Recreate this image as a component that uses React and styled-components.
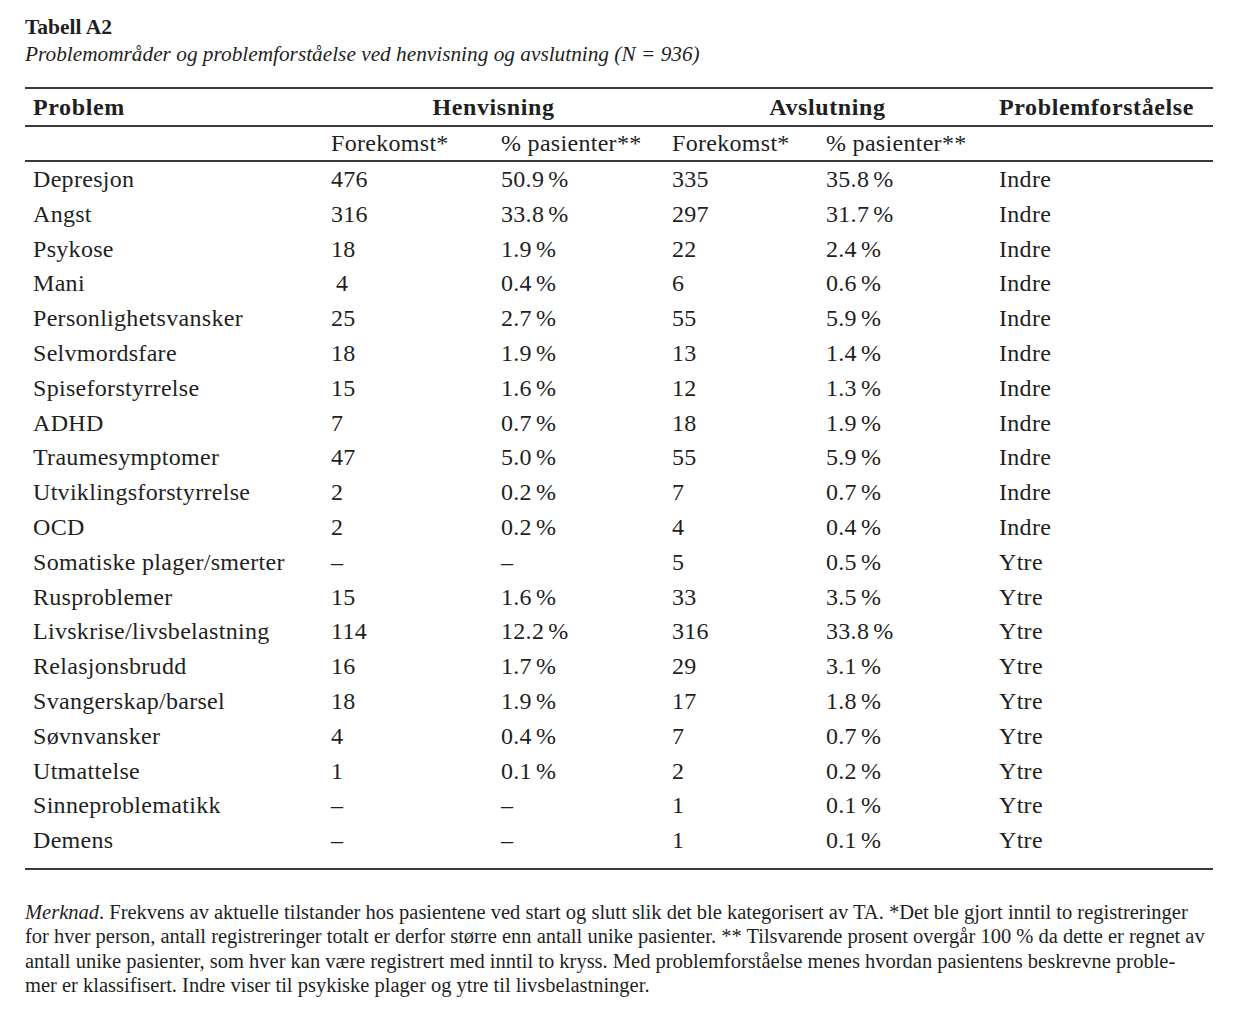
import styled, { createGlobalStyle } from 'styled-components';

const GlobalStyle = createGlobalStyle`
  html, body {
    margin: 0;
    padding: 0;
    background: #fff;
  }
  body {
    font-family: "Liberation Serif", "DejaVu Serif", serif;
    color: #1f1f1f;
  }
`;

const Page = styled.div`
  width: 1240px;
  padding: 14px 27px 0 25px;
  box-sizing: border-box;
`;

const Caption = styled.div`
  font-size: 21.5px;
  font-weight: bold;
  line-height: 27px;
`;

const Subtitle = styled.div`
  font-size: 21.3px;
  font-style: italic;
  line-height: 27px;
`;

const Table = styled.div`
  margin-top: 19px;
  display: grid;
  grid-template-columns: 298px 170px 171px 154px 173px 1fr;
  border-top: 2px solid #3a3a3a;
  border-bottom: 2px solid #3a3a3a;
  padding-bottom: 10px;
  font-size: 24px;
  letter-spacing: 0.3px;
`;

const HeadCell = styled.div`
  grid-column: ${(p) => p.span || 'auto'};
  font-weight: bold;
  letter-spacing: 0.6px;
  text-align: ${(p) => (p.center ? 'center' : 'left')};
  padding: 0 8px;
  height: 36px;
  line-height: 36px;
  border-bottom: 2px solid #3a3a3a;
`;

const SubCell = styled.div`
  padding: 0 8px;
  height: 33px;
  line-height: 33px;
  border-bottom: 2px solid #3a3a3a;
`;

const Cell = styled.div`
  padding: 0 8px 0 ${(p) => (p.indent ? 13 : 8)}px;
  height: 34.8px;
  line-height: 34.8px;
  white-space: nowrap;
`;

const Pct = styled.span`
  letter-spacing: -0.5px;
  margin-left: 4px;
`;

const Note = styled.div`
  margin-top: 30px;
  font-size: 20.5px;
  line-height: 24.4px;
`;

const NoteLine = styled.span`
  display: block;
  white-space: nowrap;
`;

const rows = [
  ['Depresjon', '476', '50.9 %', '335', '35.8 %', 'Indre'],
  ['Angst', '316', '33.8 %', '297', '31.7 %', 'Indre'],
  ['Psykose', '18', '1.9 %', '22', '2.4 %', 'Indre'],
  ['Mani', '4', '0.4 %', '6', '0.6 %', 'Indre'],
  ['Personlighetsvansker', '25', '2.7 %', '55', '5.9 %', 'Indre'],
  ['Selvmordsfare', '18', '1.9 %', '13', '1.4 %', 'Indre'],
  ['Spiseforstyrrelse', '15', '1.6 %', '12', '1.3 %', 'Indre'],
  ['ADHD', '7', '0.7 %', '18', '1.9 %', 'Indre'],
  ['Traumesymptomer', '47', '5.0 %', '55', '5.9 %', 'Indre'],
  ['Utviklingsforstyrrelse', '2', '0.2 %', '7', '0.7 %', 'Indre'],
  ['OCD', '2', '0.2 %', '4', '0.4 %', 'Indre'],
  ['Somatiske plager/smerter', '–', '–', '5', '0.5 %', 'Ytre'],
  ['Rusproblemer', '15', '1.6 %', '33', '3.5 %', 'Ytre'],
  ['Livskrise/livsbelastning', '114', '12.2 %', '316', '33.8 %', 'Ytre'],
  ['Relasjonsbrudd', '16', '1.7 %', '29', '3.1 %', 'Ytre'],
  ['Svangerskap/barsel', '18', '1.9 %', '17', '1.8 %', 'Ytre'],
  ['Søvnvansker', '4', '0.4 %', '7', '0.7 %', 'Ytre'],
  ['Utmattelse', '1', '0.1 %', '2', '0.2 %', 'Ytre'],
  ['Sinneproblematikk', '–', '–', '1', '0.1 %', 'Ytre'],
  ['Demens', '–', '–', '1', '0.1 %', 'Ytre'],
];

const renderValue = (v) =>
  v.endsWith(' %') ? (
    <>
      {v.slice(0, -2)}
      <Pct>%</Pct>
    </>
  ) : (
    v
  );

export default function App() {
  return (
    <Page>
      <GlobalStyle />
      <Caption>Tabell A2</Caption>
      <Subtitle>Problemområder og problemforståelse ved henvisning og avslutning (N = 936)</Subtitle>
      <Table>
        <HeadCell>Problem</HeadCell>
        <HeadCell span="span 2" center>Henvisning</HeadCell>
        <HeadCell span="span 2" center>Avslutning</HeadCell>
        <HeadCell>Problemforståelse</HeadCell>

        <SubCell />
        <SubCell>Forekomst*</SubCell>
        <SubCell>% pasienter**</SubCell>
        <SubCell>Forekomst*</SubCell>
        <SubCell>% pasienter**</SubCell>
        <SubCell />

        {rows.map((r) =>
          r.map((v, i) => (
            <Cell key={r[0] + i} indent={r[0] === 'Mani' && i === 1}>
              {renderValue(v)}
            </Cell>
          ))
        )}
      </Table>
      <Note>
        <NoteLine>
          <i>Merknad</i>. Frekvens av aktuelle tilstander hos pasientene ved start og slutt slik det ble kategorisert av TA. *Det ble gjort inntil to registreringer
        </NoteLine>
        <NoteLine>
          for hver person, antall registreringer totalt er derfor større enn antall unike pasienter. ** Tilsvarende prosent overgår 100 % da dette er regnet av
        </NoteLine>
        <NoteLine>
          antall unike pasienter, som hver kan være registrert med inntil to kryss. Med problemforståelse menes hvordan pasientens beskrevne proble-
        </NoteLine>
        <NoteLine>mer er klassifisert. Indre viser til psykiske plager og ytre til livsbelastninger.</NoteLine>
      </Note>
    </Page>
  );
}
